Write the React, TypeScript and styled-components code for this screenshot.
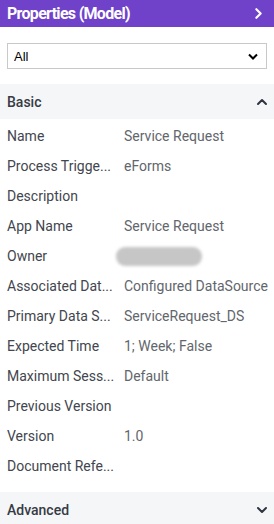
import { styled, createGlobalStyle } from 'styled-components'

const GlobalStyle = createGlobalStyle`
	body {
		margin: 0;
		background: #ffffff;
		font-family: Roboto, "Noto Sans", sans-serif;
	}
`

const Panel = styled.div`
	width: 274px;
	height: 524px;
	display: flex;
	flex-direction: column;
	overflow: hidden;
	background: #ffffff;
`
const TitleBar = styled.div`
	height: 27px;
	flex-shrink: 0;
	box-sizing: border-box;
	background: #6f42c9;
	color: #ffffff;
	display: flex;
	align-items: center;
	justify-content: space-between;
	padding: 0 9px 0 7px;
	font-size: 16px;
	font-weight: 700;
	letter-spacing: -0.7px;
`
const FilterWrap = styled.div`
	padding: 16px 7px 15px 7px;
	flex-shrink: 0;
`
const Select = styled.select`
	display: block;
	box-sizing: border-box;
	width: 260px;
	height: 26px;
	margin: 0;
	border: 1px solid #c9c9c9;
	border-radius: 0;
	background: #ffffff;
	font-family: "Liberation Sans", Arial, sans-serif;
	font-size: 13px;
	color: #000000;
	padding: 0 6px;
	appearance: none;
	background-image: url("data:image/svg+xml,%3Csvg xmlns='http://www.w3.org/2000/svg' width='10' height='7' viewBox='0 0 10 7'%3E%3Cpath d='M1 1.5l4 4 4-4' fill='none' stroke='%23000' stroke-width='2'/%3E%3C/svg%3E");
	background-repeat: no-repeat;
	background-position: right 8px center;
`
const Section = styled.div`
	display: flex;
	flex-direction: column;
	flex-shrink: 0;
`
const SectionHeader = styled.div`
	height: 35px;
	background: #f5f6f8;
	display: flex;
	align-items: center;
	justify-content: space-between;
	padding: 0 6px 0 7px;
	font-size: 14px;
	font-weight: 500;
	color: #363b44;
`
const Rows = styled.div`
	display: flex;
	flex-direction: column;
	padding: 2px 0 11px 0;
`
const Row = styled.div`
	height: 30px;
	display: flex;
	align-items: center;
	padding-left: 7px;
	font-size: 14px;
`
const Label = styled.div`
	width: 110px;
	margin-right: 7px;
	color: #42464e;
	white-space: nowrap;
	overflow: hidden;
`
const Value = styled.div`
	color: #62666c;
	white-space: nowrap;
`
const Redacted = styled.div`
	width: 86px;
	height: 19px;
	margin-left: -8px;
	border-radius: 9px;
	background: #c6c6c6;
	filter: blur(1.5px);
`

const Chevron = ({ dir, color, size = 12 }: { dir: 'up' | 'down' | 'right'; color: string; size?: number }) => {
	const d = dir === 'up' ? 'M2 8l4-4 4 4' : dir === 'down' ? 'M2 4l4 4 4-4' : 'M4 2l4 4-4 4'
	return (
		<svg width={size} height={size} viewBox="0 0 12 12">
			<path d={d} fill="none" stroke={color} strokeWidth={2} strokeLinecap="round" strokeLinejoin="round" />
		</svg>
	)
}

// labels are shown shortened, as the panel does
const rows: { label: string; full: string; value?: string; redacted?: boolean }[] = [
	{ label: 'Name', full: 'Name', value: 'Service Request' },
	{ label: 'Process Trigge...', full: 'Process Triggers', value: 'eForms' },
	{ label: 'Description', full: 'Description' },
	{ label: 'App Name', full: 'App Name', value: 'Service Request' },
	{ label: 'Owner', full: 'Owner', redacted: true },
	{ label: 'Associated Dat...', full: 'Associated DataSource', value: 'Configured DataSource' },
	{ label: 'Primary Data S...', full: 'Primary Data Source', value: 'ServiceRequest_DS' },
	{ label: 'Expected Time', full: 'Expected Time', value: '1; Week; False' },
	{ label: 'Maximum Sess...', full: 'Maximum Sessions', value: 'Default' },
	{ label: 'Previous Version', full: 'Previous Version' },
	{ label: 'Version', full: 'Version', value: '1.0' },
	{ label: 'Document Refe...', full: 'Document Reference' },
]

export default function App() {
	return (
		<>
			<GlobalStyle />
			<Panel>
				<TitleBar>
					<span>Properties (Model)</span>
					<Chevron dir="right" color="#ffffff" size={13} />
				</TitleBar>
				<FilterWrap>
					<Select defaultValue="All">
						<option>All</option>
					</Select>
				</FilterWrap>
				<Section>
					<SectionHeader>
						<span>Basic</span>
						<Chevron dir="up" color="#2f3440" />
					</SectionHeader>
					<Rows>
						{rows.map(r => (
							<Row key={r.full}>
								<Label title={r.full}>{r.label}</Label>
								{r.redacted ? <Redacted /> : <Value>{r.value}</Value>}
							</Row>
						))}
					</Rows>
				</Section>
				<Section>
					<SectionHeader>
						<span>Advanced</span>
						<Chevron dir="down" color="#2f3440" />
					</SectionHeader>
				</Section>
			</Panel>
		</>
	)
}
